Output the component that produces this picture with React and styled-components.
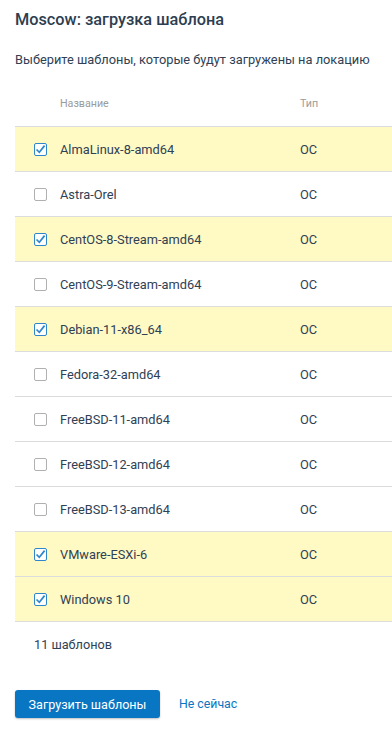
import React, { useState } from "react";
import styled, { createGlobalStyle } from "styled-components";

const Global = createGlobalStyle`
  html, body { margin: 0; padding: 0; background: #fff; }
  body { font-family: Roboto, "Noto Sans", sans-serif; color: #2f4154; overflow: hidden; }
  * { box-sizing: border-box; }
`;

const Page = styled.div`
  width: 392px;
  height: 740px;
  padding: 10px 0 0 15px;
  overflow: hidden;
`;

const Title = styled.h1`
  margin: 0;
  font-size: 16.3px;
  font-weight: 500;
  line-height: 20px;
  color: #2c3e50;
`;

const Subtitle = styled.p`
  margin: 21px 0 0;
  font-size: 12.8px;
  line-height: 18px;
  color: #2f4154;
  white-space: nowrap;
`;

const Table = styled.div`
  margin-top: 21px;
  width: 392px;
  border-bottom: 1px solid #dcdcdc;
`;

const Row = styled.div`
  display: grid;
  grid-template-columns: 45px 240px 1fr;
  align-items: center;
  height: ${(p) => (p.$head ? "36px" : "45px")};
  padding-bottom: ${(p) => (p.$head ? "10px" : "0")};
  border-top: ${(p) => (p.$head ? "none" : "1px solid #dcdcdc")};
  background: ${(p) => (p.$selected ? "#fff9c4" : "#fff")};
  font-size: ${(p) => (p.$head ? "10.7px" : "12.8px")};
  color: ${(p) => (p.$head ? "#9b9b9b" : "#2f4154")};
  cursor: ${(p) => (p.$head ? "default" : "pointer")};
`;

const CheckCell = styled.div`
  display: flex;
  padding-left: 19px;
  align-items: center;
`;

const Box = styled.span`
  width: 13px;
  height: 13px;
  border-radius: 2px;
  border: 1px solid ${(p) => (p.$on ? "#2f86cb" : "#b0b0b0")};
  background: #fff;
  display: flex;
  align-items: center;
  justify-content: center;
`;

const Footer = styled.div`
  padding: 14px 0 0 19px;
  font-size: 12.7px;
  line-height: 18px;
  color: #2f4154;
`;

const Actions = styled.div`
  margin-top: 36px;
  display: flex;
  align-items: center;
  gap: 19px;
`;

const Primary = styled.button`
  height: 28px;
  width: 145px;
  padding: 0;
  border: none;
  border-radius: 3px;
  background: #0876c2;
  color: #fff;
  font-family: inherit;
  font-size: 12.6px;
  box-shadow: 0 1px 2px rgba(0, 0, 0, 0.25);
  cursor: pointer;
`;

const LinkBtn = styled.button`
  border: none;
  background: none;
  padding: 0;
  color: #0876c2;
  font-family: inherit;
  font-size: 12.3px;
  cursor: pointer;
`;

const initial = [
  ["AlmaLinux-8-amd64", true],
  ["Astra-Orel", false],
  ["CentOS-8-Stream-amd64", true],
  ["CentOS-9-Stream-amd64", false],
  ["Debian-11-x86_64", true],
  ["Fedora-32-amd64", false],
  ["FreeBSD-11-amd64", false],
  ["FreeBSD-12-amd64", false],
  ["FreeBSD-13-amd64", false],
  ["VMware-ESXi-6", true],
  ["Windows 10", true],
];

function Check({ on }) {
  return (
    <Box $on={on}>
      {on && (
        <svg width="11" height="11" viewBox="0 0 11 11">
          <path d="M1.5 5.5 L4.3 8.3 L9.6 1.6" fill="none" stroke="#2f86cb" strokeWidth="1.7" />
        </svg>
      )}
    </Box>
  );
}

export default function App() {
  const [rows, setRows] = useState(initial);
  const toggle = (i) =>
    setRows((r) => r.map((x, j) => (j === i ? [x[0], !x[1]] : x)));
  return (
    <Page>
      <Global />
      <Title>Moscow: загрузка шаблона</Title>
      <Subtitle>Выберите шаблоны, которые будут загружены на локацию</Subtitle>
      <Table>
        <Row $head>
          <span />
          <span>Название</span>
          <span>Тип</span>
        </Row>
        {rows.map(([name, on], i) => (
          <Row key={name} $selected={on} onClick={() => toggle(i)}>
            <CheckCell>
              <Check on={on} />
            </CheckCell>
            <span>{name}</span>
            <span>ОС</span>
          </Row>
        ))}
      </Table>
      <Footer>11 шаблонов</Footer>
      <Actions>
        <Primary>Загрузить шаблоны</Primary>
        <LinkBtn>Не сейчас</LinkBtn>
      </Actions>
    </Page>
  );
}
